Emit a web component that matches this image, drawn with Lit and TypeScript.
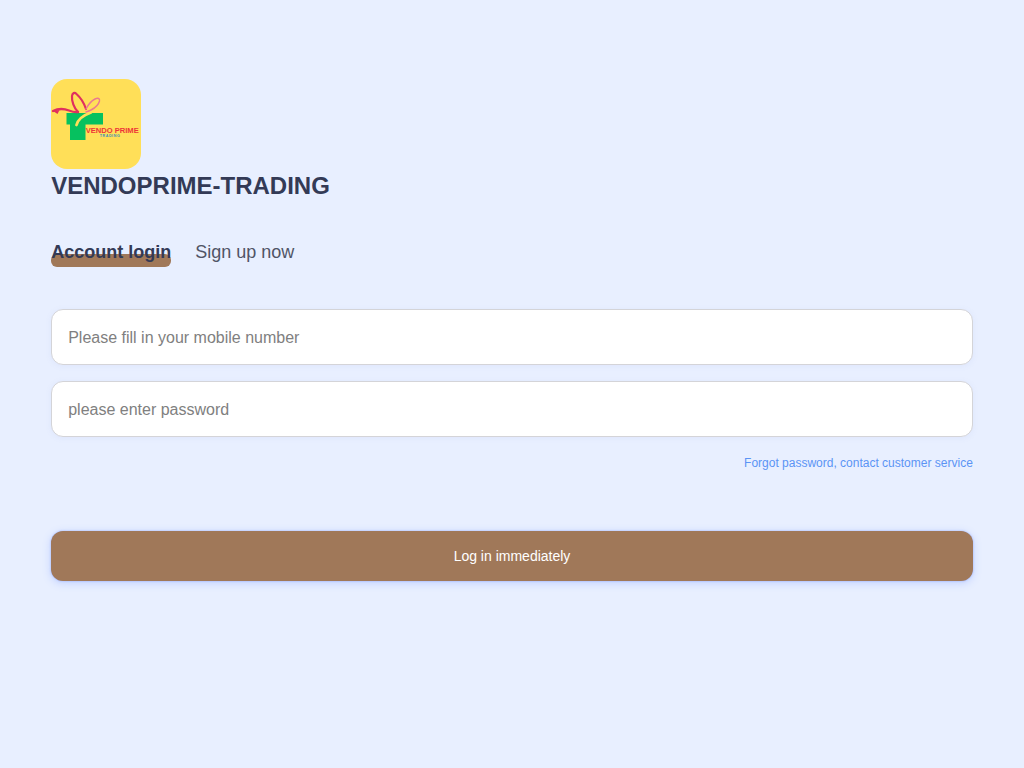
import { LitElement, html, css, svg } from "lit";
import { customElement } from "lit/decorators.js";

@customElement("app-root")
export class AppRoot extends LitElement {
  static styles = css`
    :host {
      display: block;
      min-height: 768px;
      box-sizing: border-box;
      background: #e8efff;
      padding: 79px 51.2px 0;
      font-family: "Liberation Sans", Arial, sans-serif;
    }
    .logo {
      display: block;
      width: 90px;
      height: 90px;
    }
    h1 {
      margin: 0;
      height: 34px;
      line-height: 34px;
      font-size: 24px;
      font-weight: 700;
      color: #333a56;
    }
    .tabs {
      display: flex;
      gap: 24px;
      margin-top: 31px;
      height: 36px;
    }
    .tab {
      position: relative;
      font-size: 18px;
      line-height: 36px;
      height: 36px;
      color: #505466;
    }
    .tab span {
      position: relative;
    }
    .tab.active {
      font-weight: 700;
      color: #333a56;
    }
    .tab.active::before {
      content: "";
      position: absolute;
      left: 0;
      right: 0;
      top: 20px;
      height: 13px;
      border-radius: 6px;
      background: #a07859;
    }
    .field {
      display: flex;
      align-items: center;
      box-sizing: border-box;
      height: 56px;
      padding: 1px 16px 0;
      background: #fff;
      border: 1px solid #d4d4d8;
      border-radius: 12px;
      box-shadow: 0 1px 6px rgba(120, 130, 220, 0.08);
      font-size: 16px;
      color: #808080;
    }
    .field.first {
      margin-top: 39px;
    }
    .field + .field {
      margin-top: 16px;
    }
    .forgot {
      margin-top: 18px;
      text-align: right;
      font-size: 12px;
      line-height: 16px;
      color: #5b94f5;
    }
    .submit {
      display: flex;
      align-items: center;
      justify-content: center;
      box-sizing: border-box;
      height: 50px;
      margin-top: 60px;
      border-radius: 12px;
      background: #a07859;
      color: #fff;
      font-size: 14px;
      box-shadow: 0 2px 8px rgba(90, 130, 255, 0.28), 0 0 2px rgba(80, 120, 255, 0.5);
    }
  `;

  private logo() {
    return svg`<svg class="logo" viewBox="0 0 90 90" role="img" aria-label="Vendo Prime logo">
      <rect width="90" height="90" rx="16" fill="#ffdf58" />
      <path d="M15.5 34 H52 V45.5 H34.5 V61 H19 V45.5 H15.5 Z" fill="#06c15f" />
      <path d="M40 33.5 C33 36 27 40 25.5 46" fill="none" stroke="#ffdf58" stroke-width="2.8" stroke-linecap="round" />
      <path d="M2 32 C8 29 14 30 18 31.5 C21 32.7 24 33.5 27 33" fill="none" stroke="#e0305e" stroke-width="2.4" stroke-linecap="round" />
      <path d="M2 32 L6.5 35 L8.5 31 Z" fill="#e0305e" />
      <path d="M27 33 C23 29 20.5 22 21 17 C21.3 14 23.5 13 25.5 15 C30 19 33 24 35 30"
        fill="none" stroke="#e0305e" stroke-width="2.2" stroke-linecap="round" stroke-linejoin="round" />
      <path d="M35 30 C37 26 40 22 44 20 C47 18.5 49 19.5 48.5 22 C47.5 26 43 29.5 40 31 C38 32 36.5 32.5 35 33"
        fill="none" stroke="#ea7a90" stroke-width="1.4" stroke-linecap="round" stroke-linejoin="round" />
      <text x="34.7" y="53.6" font-size="8" font-weight="700" fill="#ee3438" font-family="Liberation Sans, sans-serif" textLength="53" lengthAdjust="spacingAndGlyphs">VENDO PRIME</text>
      <text x="48.7" y="58.4" font-size="3.6" font-weight="700" fill="#3f8fb8" font-family="Liberation Sans, sans-serif" textLength="20" lengthAdjust="spacing">TRADING</text>
    </svg>`;
  }

  render() {
    return html`
      ${this.logo()}
      <h1>VENDOPRIME-TRADING</h1>
      <div class="tabs">
        <div class="tab active"><span>Account login</span></div>
        <div class="tab"><span>Sign up now</span></div>
      </div>
      <div class="field first">Please fill in your mobile number</div>
      <div class="field">please enter password</div>
      <div class="forgot">Forgot password, contact customer service</div>
      <div class="submit">Log in immediately</div>
    `;
  }
}
